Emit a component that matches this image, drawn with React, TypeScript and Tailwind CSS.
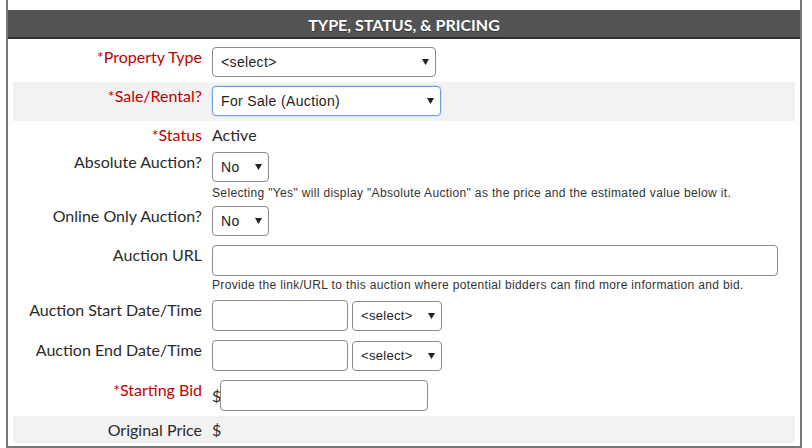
import type { ReactNode } from "react";
import clsx from "clsx";

const LATO = "font-[Lato,'Liberation_Sans',sans-serif]";
const ARIAL = "font-['Liberation_Sans',Arial,sans-serif]";

function Row({
  label,
  required,
  gray,
  className,
  children,
}: {
  label: string;
  required?: boolean;
  gray?: boolean;
  className?: string;
  children: ReactNode;
}) {
  return (
    <div className={clsx("flex items-start pt-[4px]", gray && "bg-[#f2f2f2]", className)}>
      <div
        className={clsx(
          "w-[199px] shrink-0 pr-[10px] text-right text-[16px] leading-[20px]",
          required ? "text-[#c00000]" : "text-[#2b2b2b]"
        )}
      >
        {required && "*"}
        {label}
      </div>
      <div className="min-w-0 flex-1">{children}</div>
    </div>
  );
}

function Select({
  value,
  width,
  focused,
  small,
  className,
}: {
  value: string;
  width: string;
  focused?: boolean;
  small?: boolean;
  className?: string;
}) {
  return (
    <div className={clsx("relative h-[30px] shrink-0", width, className)}>
      <select
        defaultValue={value}
        className={clsx(
          "h-full w-full appearance-none rounded-[4px] border bg-white pl-[8px] text-[#222] outline-none",
          ARIAL,
          small ? "text-[13px] tracking-[0.3px]" : "text-[14px] tracking-[0.35px]",
          focused
            ? "border-[#6b9fe0] shadow-[0_0_0_1px_#d3e3f7]"
            : "border-[#8a8a8a]"
        )}
      >
        <option>{value}</option>
      </select>
      <svg
        className="pointer-events-none absolute right-[7px] top-1/2 -mt-[3px]"
        width="7"
        height="6"
        viewBox="0 0 7 6"
      >
        <path d="M0 0h7L3.5 6z" fill="#222" />
      </svg>
    </div>
  );
}

function TextInput({ width }: { width: string }) {
  return (
    <input
      type="text"
      className={clsx(
        "h-[31px] shrink-0 rounded-[4px] border border-[#8a8a8a] bg-white px-2 outline-none",
        width
      )}
    />
  );
}

function Help({ children, className }: { children: ReactNode; className?: string }) {
  return (
    <div
      className={clsx(
        "whitespace-nowrap text-[12px] leading-[14px] tracking-[0.35px] text-[#333]",
        ARIAL,
        className
      )}
    >
      {children}
    </div>
  );
}

export default function App() {
  return (
    <div className={clsx("w-[812px] bg-white", LATO)}>
      <div className="ml-[6px] w-[796px] border-x-2 border-b-2 border-[#777] pt-[10px] pb-[3px]">
        <div className="h-[29px] border-b-2 border-[#2f2f2f] bg-[#535353] pt-[2px] text-center text-[16px] font-bold leading-[25px] text-white [text-shadow:0_1px_1px_rgba(0,0,0,0.35)]">
          TYPE, STATUS, &amp; PRICING
        </div>

        <div className="px-[5px] pt-[4px]">
          <Row label="Property Type" required className="pb-[5px]">
            <Select value="<select>" width="w-[224px]" />
          </Row>

          <Row label="Sale/Rental?" required gray className="pb-[5px]">
            <Select value="For Sale (Auction)" width="w-[229px]" focused />
          </Row>

          <Row label="Status" required className="pb-[3px]">
            <div className="text-[16px] leading-[20px] text-[#2b2b2b]">Active</div>
          </Row>

          <Row label="Absolute Auction?" className="pb-[2px]">
            <Select value="No" width="w-[57px]" />
            <Help className="mt-[4px]">
              Selecting "Yes" will display "Absolute Auction" as the price and the estimated value below it.
            </Help>
          </Row>

          <Row label="Online Only Auction?" className="pb-[5px]">
            <Select value="No" width="w-[57px]" />
          </Row>

          <Row label="Auction URL" className="pb-[4px]">
            <TextInput width="w-[566px]" />
            <Help className="mt-[2px]">
              Provide the link/URL to this auction where potential bidders can find more information and bid.
            </Help>
          </Row>

          <Row label="Auction Start Date/Time" className="pb-[5px]">
            <div className="flex items-start gap-[4px]">
              <TextInput width="w-[136px]" />
              <Select value="<select>" width="w-[90px]" small className="mt-[1px]" />
            </div>
          </Row>

          <Row label="Auction End Date/Time" className="pb-[5px]">
            <div className="flex items-start gap-[4px]">
              <TextInput width="w-[136px]" />
              <Select value="<select>" width="w-[90px]" small className="mt-[1px]" />
            </div>
          </Row>

          <Row label="Starting Bid" required className="pb-[5px]">
            <div className="flex items-center">
              <span className="w-[8px] text-[16px] leading-[20px] text-[#2b2b2b]">$</span>
              <TextInput width="w-[208px]" />
            </div>
          </Row>

          <Row label="Original Price" gray className="pb-[3px]">
            <div className="text-[16px] leading-[20px] text-[#2b2b2b]">$</div>
          </Row>
        </div>
      </div>
    </div>
  );
}
